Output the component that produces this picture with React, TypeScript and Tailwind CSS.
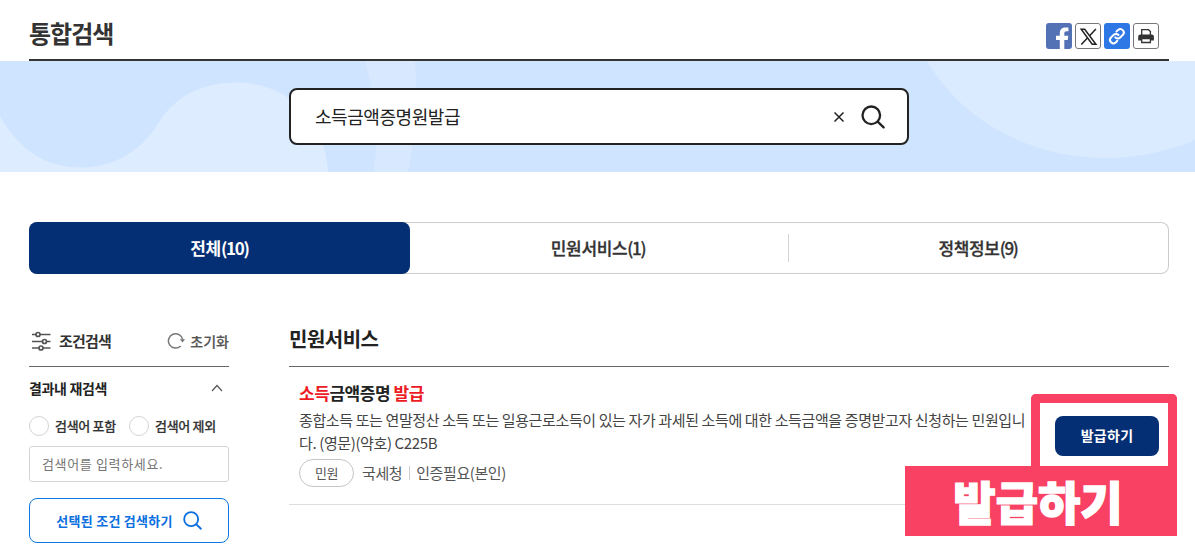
import { useState } from 'react'

const tabs = [
  { label: '전체', count: 10 },
  { label: '민원서비스', count: 1 },
  { label: '정책정보', count: 9 },
]

function SearchIcon({ className }: { className?: string }) {
  return (
    <svg className={className} viewBox="0 0 24 24" fill="none" stroke="currentColor" strokeWidth="2.3" strokeLinecap="round">
      <circle cx="10.3" cy="10.3" r="8.8" />
      <path d="M16.7 16.7 22.6 22.4" />
    </svg>
  )
}

function ShareButtons() {
  return (
    <div className="flex gap-[3px]">
      <button className="size-[26px] rounded-[3px] bg-[#5372b5]">
        <svg viewBox="0 0 26 26" className="size-[26px]">
          <path
            d="M13.8 26V17H10V12.8H13.8V10.3C13.8 6.4 16 4.4 19.6 4.4H22.4V8.3H20.4C18.9 8.3 18.3 9 18.3 10.4V12.8H22.3L21.7 17H18.3V26Z"
            fill="#fff"
          />
        </svg>
      </button>
      <button className="size-[26px] rounded-[3px] border border-[#777] bg-white">
        <svg viewBox="0 0 24 24" className="size-6" fill="none" stroke="#222" strokeWidth="1.5">
          <path d="M5.2 5.2H8.7L19.9 20.2H16.2Z" />
          <path d="M19.9 5 13.6 11.7M11.4 13.9 5.3 20.4" />
        </svg>
      </button>
      <button className="size-[26px] rounded-[3px] bg-[#2e78e6]">
        <svg viewBox="0 0 26 26" className="size-[26px]" fill="none" stroke="#fff" strokeWidth="2" strokeLinecap="round">
          <path d="M11.3 14.4a3.4 3.4 0 0 0 4.9.1l2.7-2.7a3.4 3.4 0 0 0-4.8-4.8l-1.7 1.6" />
          <path d="M14.5 12a3.4 3.4 0 0 0-4.9-.1l-2.7 2.7a3.4 3.4 0 0 0 4.8 4.8l1.6-1.6" />
        </svg>
      </button>
      <button className="size-[26px] rounded-[3px] border border-[#777] bg-white">
        <svg viewBox="0 0 24 24" className="size-6">
          <path d="M7.7 11V5.7H14.5L16.4 7.6V11" fill="#fff" stroke="#333" strokeWidth="1.3" />
          <path d="M4.2 16.4V12.8Q4.2 10.6 6.4 10.6H17.7Q19.9 10.6 19.9 12.8V16.4Z" fill="#333" />
          <path d="M7.7 14.7H16.4V18.5H7.7Z" fill="#fff" stroke="#333" strokeWidth="1.3" />
        </svg>
      </button>
    </div>
  )
}

function SearchBanner() {
  const [query, setQuery] = useState('소득금액증명원발급')

  return (
    <div className="relative h-[111px] bg-[#cfe4ff] pt-[27px] pl-[289px]">
      <svg className="absolute inset-0" width="1195" height="111" viewBox="0 0 1195 111">
        <path d="M0 55C18 88 45 106.5 82 106.5C116 106.5 144 87 159 61C175 36 201 21.5 236 21.5C290 21.5 326 61 328 111H0Z" fill="#ddecff" />
        <path d="M365 0Q381 55 374 111H408Q420 55 415 0Z" fill="#d8e8ff" />
        <path d="M927 0C963 61 1032 97 1105 97C1138 97 1169 90 1195 79V0Z" fill="#dbebff" />
      </svg>
      <div className="relative flex h-[57px] w-[620px] items-center rounded-lg border-2 border-[#222] bg-white pr-[22px] pl-6">
        <input
          className="min-w-0 flex-1 pb-[2px] text-lg tracking-[-0.45px] text-[#222] outline-none"
          value={query}
          onChange={(e) => setQuery(e.target.value)}
        />
        <button className="mr-[17px]" onClick={() => setQuery('')}>
          <svg className="size-[10px]" viewBox="0 0 10 10" stroke="#222" strokeWidth="1.5">
            <path d="M.5.5 9.5 9.5M9.5.5.5 9.5" />
          </svg>
        </button>
        <SearchIcon className="size-6 text-[#222]" />
      </div>
    </div>
  )
}

function Sidebar() {
  return (
    <aside className="w-[200px]">
      <div className="flex h-[51px] items-center border-b border-[#666]">
        <svg className="ml-[3px] h-5 w-5" viewBox="0 0 20 20" fill="#fff" stroke="#555" strokeWidth="1.7">
          <path d="M0 3.5H18.5M0 10.5H18.5M0 17H18.5" />
          <circle cx="6" cy="3.5" r="2" />
          <circle cx="12.5" cy="10.5" r="2" />
          <circle cx="9" cy="17" r="2" />
        </svg>
        <h3 className="ml-[7px] text-[15px] font-bold tracking-[-0.8px] text-[#333]">조건검색</h3>
        <button className="ml-auto flex items-center gap-[5px] text-sm font-medium text-[#555] [-webkit-text-stroke:0.2px_#555]">
          <svg className="h-[18px] w-[18px]" viewBox="0 0 18 18" fill="none" stroke="#777" strokeWidth="1.5">
            <path d="M13.7 14A7.2 7.2 0 1 1 15.7 7.5" />
            <path d="M12.7 7.2H18L15.6 10.5Z" fill="#777" stroke="none" />
          </svg>
          초기화
        </button>
      </div>
      <div className="flex h-[43px] items-center justify-between pr-[6px] pb-[2px]">
        <h4 className="text-sm font-bold tracking-[-0.35px] text-[#222]">결과내 재검색</h4>
        <svg className="h-3 w-3" viewBox="0 0 12 12" fill="none" stroke="#555" strokeWidth="1.2">
          <path d="M1 9 6 3.5 11 9" />
        </svg>
      </div>
      <div className="mt-[6px] flex h-5 text-[13px] font-medium text-[#333] [-webkit-text-stroke:0.2px_#333]">
        {['검색어 포함', '검색어 제외'].map((label) => (
          <label key={label} className="flex w-[100px] items-center gap-[6px] tracking-[-0.3px] whitespace-nowrap">
            <input type="radio" name="scope" className="size-5 appearance-none rounded-full border border-[#d4d4d4]" />
            {label}
          </label>
        ))}
      </div>
      <input
        className="mt-[10px] block h-9 w-full rounded-[3px] border border-[#d4d4d4] px-3 pb-[2px] text-[13px] tracking-[0.65px] text-[#333] placeholder:text-[#757575]"
        placeholder="검색어를 입력하세요."
      />
      <button className="mt-4 flex h-[45px] w-full items-center justify-center gap-[10px] rounded-lg border border-[#0b78e3] text-[13px] font-bold tracking-[0.25px] text-[#0b6fe0]">
        선택된 조건 검색하기
        <SearchIcon className="size-[19px]" />
      </button>
    </aside>
  )
}

function Results() {
  return (
    <section className="relative w-[880px]">
      <h2 className="flex h-[51px] items-center border-b border-[#666] pb-1 text-xl font-bold tracking-[-0.5px] text-[#222]">
        민원서비스
      </h2>
      <article className="flex h-[138px] border-b border-[#ddd] px-[10px] pt-[14px]">
        <div className="w-[735px]">
          <h3 className="text-[17px] leading-6 font-bold tracking-[-0.45px] text-[#222]">
            <em className="text-[#ed1c24] not-italic">소득</em>금액증명 <em className="text-[#ed1c24] not-italic">발급</em>
          </h3>
          <p className="mt-[3px] text-[15px] leading-[23px] tracking-[-0.38px] whitespace-nowrap text-[#444]">
            종합소득 또는 연말정산 소득 또는 일용근로소득이 있는 자가 과세된 소득에 대한 소득금액을 증명받고자 신청하는 민원입니
            <br />
            다. (영문)(약호) C225B
          </p>
          <div className="mt-[5px] flex h-7 items-center text-[15px] tracking-[-0.4px] text-[#555]">
            <span className="flex h-7 w-[55px] items-center justify-center rounded-full border border-[#c4c4c4] text-[13px]">민원</span>
            <span className="ml-2">국세청</span>
            <i className="mr-[6px] ml-[7px] h-[14px] w-px bg-[#ccc]" />
            <span>인증필요(본인)</span>
          </div>
        </div>
        <button className="mt-[35px] ml-auto h-10 w-[104px] rounded-lg bg-[#052f74] pb-[2px] text-sm font-bold tracking-[0.3px] text-white">발급하기</button>
      </article>

      {/* callout drawn over the issue button */}
      <div className="pointer-events-none absolute top-[78px] -right-2 flex flex-col items-end">
        <div className="h-[72px] w-[146px] rounded-t-[5px] border-[9px] border-b-0 border-[#f94163]" />
        <div className="flex h-[70px] w-[272px] items-center justify-center bg-[#f94163] pr-[6px] pb-[2px] text-[46px] leading-none font-black text-white [-webkit-text-stroke:1.4px_white]">
          발급하기
        </div>
      </div>
    </section>
  )
}

export default function App() {
  const [active, setActive] = useState(0)

  return (
    <div className="h-[556px] w-[1195px] overflow-hidden bg-white font-['Noto_Sans_CJK_KR',sans-serif]">
      <header className="ml-[29px] flex h-[61px] w-[1140px] items-center justify-between border-b-2 border-[#333] pr-[10px]">
        <h1 className="mt-[7px] text-2xl font-bold tracking-[-1px] text-[#333]">통합검색</h1>
        <div className="mt-[13px]">
          <ShareButtons />
        </div>
      </header>
      <SearchBanner />
      <nav className="mt-[50px] ml-[29px] grid h-[52px] w-[1140px] grid-cols-[381px_379px_380px] rounded-lg shadow-[inset_0_0_0_1px_#ccc]">
        {tabs.map((tab, i) => (
          <div key={tab.label} className="flex h-full items-center">
            <button
              onClick={() => setActive(i)}
              className={`h-full flex-1 rounded-lg text-[17px] tracking-[-0.35px] ${
                active === i ? 'bg-[#052f74] font-bold text-white' : 'pr-[2px] font-medium text-[#333] [-webkit-text-stroke:0.3px_#333]'
              }`}
            >
              {tab.label}
              <span className="tracking-[-1.3px]">({tab.count})</span>
            </button>
            {i === 1 && <i className="h-7 w-px bg-[#d5d5d5]" />}
          </div>
        ))}
      </nav>
      <main className="mt-[42px] ml-[29px] flex gap-[60px]">
        <Sidebar />
        <Results />
      </main>
    </div>
  )
}
